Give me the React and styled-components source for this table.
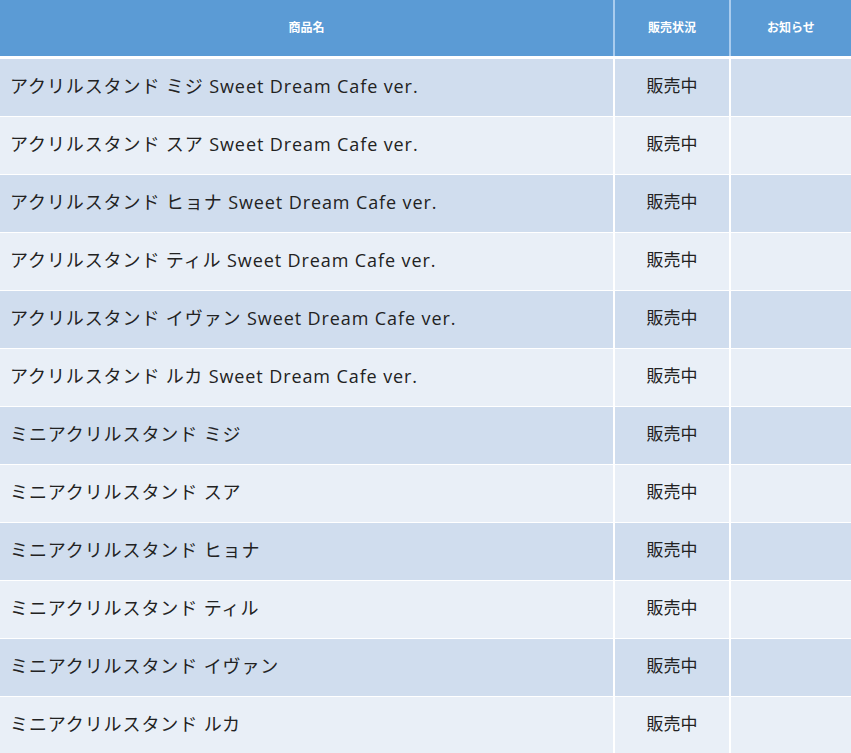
import React from "react";
import styled, { createGlobalStyle } from "styled-components";

const GlobalStyle = createGlobalStyle`
  body {
    margin: 0;
    background: #ffffff;
    font-family: "Open Sans", "Noto Sans CJK JP", sans-serif;
  }
`;

const Table = styled.div`
  width: 851px;
  display: flex;
  flex-direction: column;
  background: #ffffff;
`;

const Row = styled.div`
  display: grid;
  grid-template-columns: 613px 114px 120px;
  column-gap: 2px;
  height: ${(p) => (p.$head ? "56px" : "57px")};
  margin-bottom: ${(p) => (p.$head ? "3px" : "1px")};
  background: ${(p) => (p.$head ? "#a9ccee" : "#ffffff")};
`;

const Cell = styled.div`
  display: flex;
  align-items: center;
  justify-content: ${(p) => (p.$left ? "flex-start" : "center")};
  padding-left: ${(p) => (p.$left ? "10px" : "0")};
  padding-bottom: 6px;
  background: ${(p) => p.$bg};
  color: #222222;
  font-size: ${(p) => (p.$left ? "18px" : "17px")};
  letter-spacing: ${(p) => (p.$left ? "0.9px" : "0")};
  white-space: nowrap;
`;

const HeadCell = styled.div`
  display: flex;
  align-items: center;
  justify-content: center;
  padding-bottom: 2px;
  background: #5b9bd5;
  color: #ffffff;
  font-size: 12px;
  font-weight: 700;
`;

const items = [
  "アクリルスタンド ミジ Sweet Dream Cafe ver.",
  "アクリルスタンド スア Sweet Dream Cafe ver.",
  "アクリルスタンド ヒョナ Sweet Dream Cafe ver.",
  "アクリルスタンド ティル Sweet Dream Cafe ver.",
  "アクリルスタンド イヴァン Sweet Dream Cafe ver.",
  "アクリルスタンド ルカ Sweet Dream Cafe ver.",
  "ミニアクリルスタンド ミジ",
  "ミニアクリルスタンド スア",
  "ミニアクリルスタンド ヒョナ",
  "ミニアクリルスタンド ティル",
  "ミニアクリルスタンド イヴァン",
  "ミニアクリルスタンド ルカ",
];

export default function App() {
  return (
    <>
      <GlobalStyle />
      <Table>
        <Row $head>
          <HeadCell>商品名</HeadCell>
          <HeadCell>販売状況</HeadCell>
          <HeadCell>お知らせ</HeadCell>
        </Row>
        {items.map((name, i) => {
          const bg = i % 2 === 0 ? "#d0ddee" : "#e9eff7";
          return (
            <Row key={name}>
              <Cell $left $bg={bg}>{name}</Cell>
              <Cell $bg={bg}>販売中</Cell>
              <Cell $bg={bg}></Cell>
            </Row>
          );
        })}
      </Table>
    </>
  );
}
